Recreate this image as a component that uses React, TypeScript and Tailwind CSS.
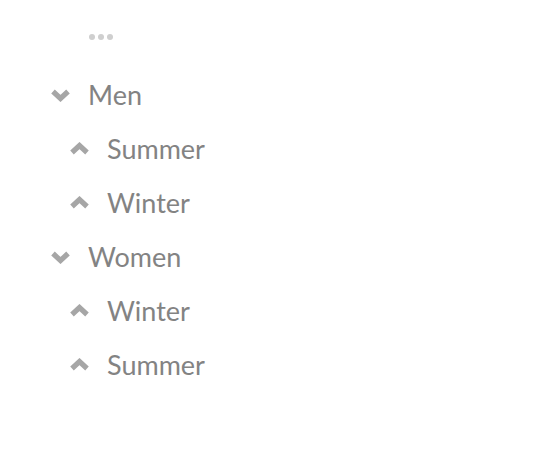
import React from "react";

function Chevron({ up }: { up?: boolean }) {
  return (
    <svg
      width="21"
      height="14"
      viewBox="0 0 21 14"
      className={`shrink-0 text-[#a6a6a6] ${up ? "rotate-180" : ""}`}
    >
      <polyline
        points="3,3.5 10.5,10.5 18,3.5"
        fill="none"
        stroke="currentColor"
        strokeWidth="5.2"
        strokeLinejoin="miter"
      />
    </svg>
  );
}

const tree = [
  { label: "Men", children: ["Summer", "Winter"] },
  { label: "Women", children: ["Winter", "Summer"] },
];

function Row({
  label,
  open,
  depth,
}: {
  label: string;
  open: boolean;
  depth: number;
}) {
  return (
    <div
      className={`flex h-[54px] items-center gap-[17px] ${
        depth === 0 ? "pl-[50px]" : "pl-[69px]"
      }`}
    >
      <Chevron up={!open} />
      <span className="-mt-[2px] text-[27px] leading-none text-[#838383]">
        {label}
      </span>
    </div>
  );
}

export default function App() {
  return (
    <div
      className="min-h-[462px] w-[560px] bg-white pt-[34px]"
      style={{ fontFamily: "Lato, 'Open Sans', sans-serif" }}
    >
      <div className="flex gap-[3px] pl-[89px]">
        <span className="h-[6px] w-[6px] rounded-full bg-[#cfcfcf]" />
        <span className="h-[6px] w-[6px] rounded-full bg-[#cfcfcf]" />
        <span className="h-[6px] w-[6px] rounded-full bg-[#cfcfcf]" />
      </div>
      <div className="mt-[28px] flex flex-col">
        {tree.map((node) => (
          <div key={node.label}>
            <Row label={node.label} open depth={0} />
            {node.children.map((c) => (
              <Row key={c} label={c} open={false} depth={1} />
            ))}
          </div>
        ))}
      </div>
    </div>
  );
}
